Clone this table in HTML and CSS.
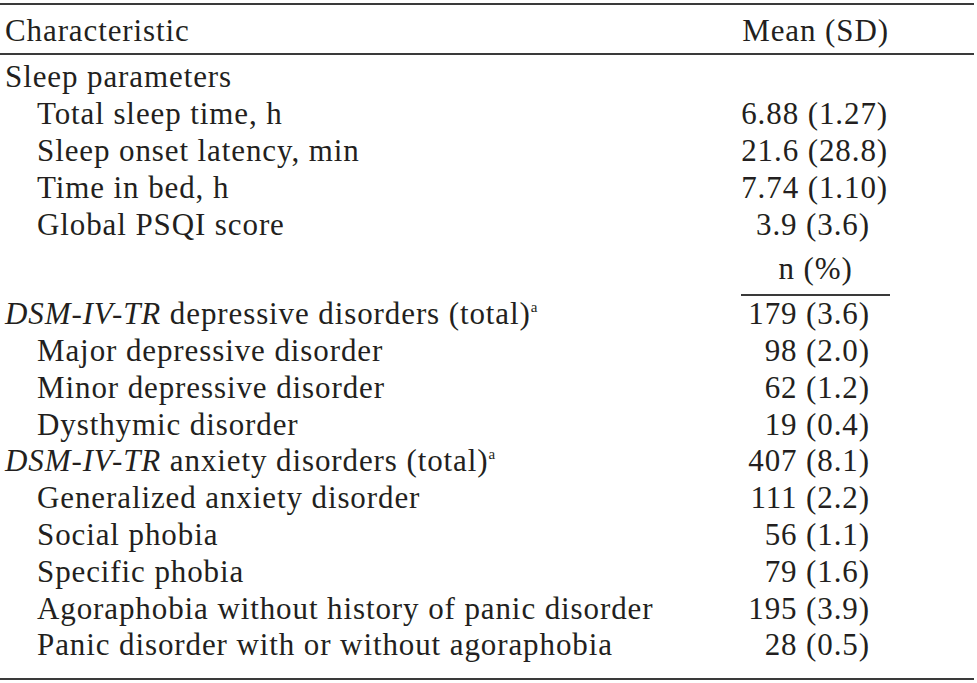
FILE: index.html
```html
<!DOCTYPE html>
<html>
<head>
<meta charset="utf-8">
<link rel="stylesheet" href="styles.css">
</head>
<body>
<table class="tbl">
  <thead>
    <tr class="head">
      <th class="lbl">Characteristic</th>
      <th class="hval">Mean (SD)</th>
      <th class="pad"></th>
    </tr>
  </thead>
  <tbody>
    <tr class="first"><td class="lbl">Sleep parameters</td><td class="val"></td><td class="pad"></td></tr>
    <tr><td class="lbl sub">Total sleep time, h</td><td class="val wide">6.88 (1.27)</td><td class="pad"></td></tr>
    <tr><td class="lbl sub">Sleep onset latency, min</td><td class="val wide">21.6 (28.8)</td><td class="pad"></td></tr>
    <tr><td class="lbl sub">Time in bed, h</td><td class="val wide">7.74 (1.10)</td><td class="pad"></td></tr>
    <tr><td class="lbl sub">Global PSQI score</td><td class="val">3.9 (3.6)</td><td class="pad"></td></tr>
    <tr class="subhead"><td class="lbl"></td><td class="hval n">n (%)</td><td class="pad"></td></tr>
    <tr><td class="lbl"><i>DSM-IV-TR</i> depressive disorders (total)<sup>a</sup></td><td class="val">179 (3.6)</td><td class="pad"></td></tr>
    <tr><td class="lbl sub">Major depressive disorder</td><td class="val">98 (2.0)</td><td class="pad"></td></tr>
    <tr><td class="lbl sub">Minor depressive disorder</td><td class="val">62 (1.2)</td><td class="pad"></td></tr>
    <tr><td class="lbl sub">Dysthymic disorder</td><td class="val">19 (0.4)</td><td class="pad"></td></tr>
    <tr><td class="lbl"><i>DSM-IV-TR</i> anxiety disorders (total)<sup>a</sup></td><td class="val">407 (8.1)</td><td class="pad"></td></tr>
    <tr><td class="lbl sub">Generalized anxiety disorder</td><td class="val">111 (2.2)</td><td class="pad"></td></tr>
    <tr><td class="lbl sub">Social phobia</td><td class="val">56 (1.1)</td><td class="pad"></td></tr>
    <tr><td class="lbl sub">Specific phobia</td><td class="val">79 (1.6)</td><td class="pad"></td></tr>
    <tr><td class="lbl sub">Agoraphobia without history of panic disorder</td><td class="val">195 (3.9)</td><td class="pad"></td></tr>
    <tr class="last"><td class="lbl sub">Panic disorder with or without agoraphobia</td><td class="val">28 (0.5)</td><td class="pad"></td></tr>
  </tbody>
</table>
</body>
</html>
```
FILE: styles.css
```css
html, body {
  margin: 0;
  padding: 0;
  background: #ffffff;
}
body {
  font-family: "Liberation Serif", "Times New Roman", serif;
  font-size: 31px;
  letter-spacing: 0.9px;
  color: #231f20;
}
.tbl {
  width: 974px;
  border-collapse: collapse;
  margin-top: 3px;
  border-top: 2px solid #3a3a3a;
  border-bottom: 2px solid #3a3a3a;
}
.tbl th, .tbl td {
  padding: 0;
  font-weight: normal;
  height: 36.8px;
  line-height: 36px;
  white-space: nowrap;
}
.head th {
  height: 44px;
  padding-top: 4px;
  border-bottom: 2px solid #3a3a3a;
  vertical-align: middle;
}
.lbl {
  text-align: left;
  padding-left: 5px !important;
}
.lbl.sub {
  padding-left: 37px !important;
}
.hval {
  width: 147px;
  text-align: center;
}
.pad {
  width: 84px;
}
.val {
  text-align: right;
  padding-right: 20px !important;
}
.val.wide {
  padding-right: 2px !important;
}
.first td {
  padding-top: 4px;
}
.subhead td {
  padding-top: 8px;
  padding-bottom: 6px;
}
.subhead .n {
  border-bottom: 2px solid #3a3a3a;
}
.last td {
  padding-bottom: 14px;
}
sup {
  font-size: 15px;
  line-height: 0;
  vertical-align: 12px;
  letter-spacing: 0;
}
```
